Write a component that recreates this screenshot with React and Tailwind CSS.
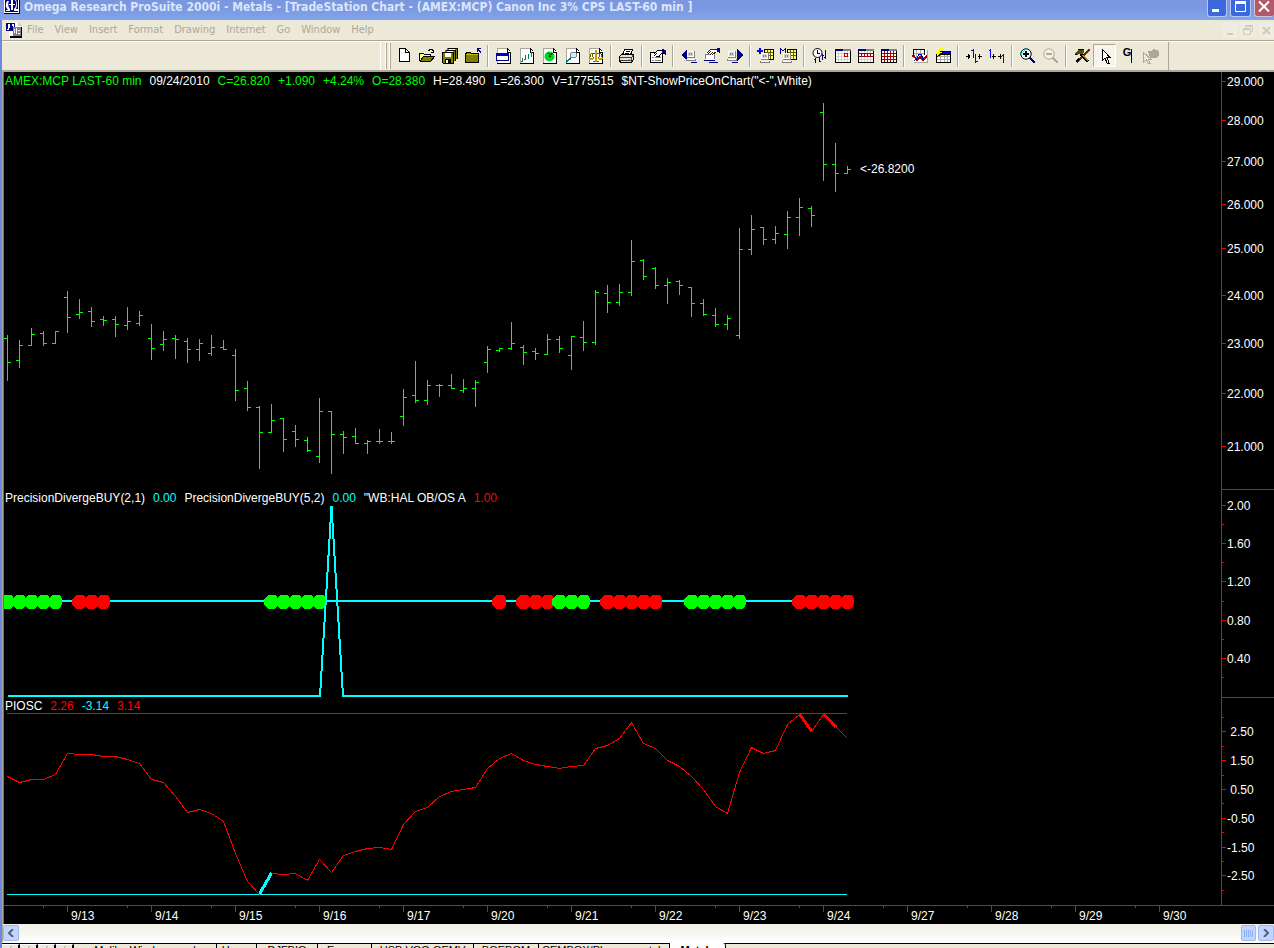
import React from "react";

/* Hourly bars, 12px apart: [high, low, open, close] in chart y units */
const BARS = [
  [335, 381, 338, 362], [340, 368, 360, 345], [328, 346, 345, 334], [331, 346, 333, 343],
  [331, 344, 343, 331], [291, 333, 297, 317], [299, 319, 314, 312], [307, 327, 311, 321],
  [316, 326, 319, 320], [316, 337, 319, 324], [307, 330, 325, 321], [311, 326, 323, 315],
  [324, 360, 338, 348], [331, 351, 344, 339], [335, 359, 338, 339], [338, 363, 341, 349],
  [339, 361, 349, 343], [335, 356, 353, 347], [340, 350, 347, 349], [349, 401, 355, 390],
  [381, 411, 388, 407], [406, 469, 407, 432], [404, 433, 432, 420], [418, 452, 418, 439],
  [425, 447, 431, 439], [437, 452, 440, 450], [398, 463, 456, 411], [411, 474, 411, 434],
  [431, 454, 434, 437], [428, 444, 436, 443], [440, 454, 443, 441], [429, 444, 441, 441],
  [432, 444, 441, 441], [389, 426, 416, 397], [361, 403, 395, 400], [380, 405, 400, 385],
  [384, 397, 385, 385], [374, 389, 385, 388], [379, 393, 390, 388], [380, 407, 388, 382],
  [346, 373, 362, 349], [348, 352, 350, 348], [322, 350, 348, 343], [345, 365, 347, 352],
  [348, 360, 351, 353], [334, 355, 354, 339], [336, 353, 339, 348], [336, 370, 355, 336],
  [321, 351, 337, 342], [290, 345, 342, 292], [285, 313, 293, 302], [284, 306, 302, 292],
  [240, 296, 292, 261], [259, 280, 260, 276], [267, 289, 268, 285], [278, 304, 285, 282],
  [280, 295, 281, 285], [287, 317, 287, 303], [299, 316, 303, 314], [308, 327, 315, 324],
  [315, 330, 324, 318], [228, 339, 335, 249], [215, 255, 249, 229], [227, 245, 227, 239],
  [226, 244, 239, 233], [211, 249, 234, 217], [198, 236, 217, 207], [206, 227, 208, 215],
  [103, 181, 112, 164], [143, 192, 164, 173], [166, 174, 173, 169],
];

const PIOSC = [
  776, 782, 779, 779, 774, 753, 754, 754, 756, 756, 759, 763, 779, 782, 796, 812, 809, 813,
  821, 853, 881, 894, 873, 874, 873, 880, 859, 872, 855, 851, 848, 847, 849, 824, 811, 807,
  796, 791, 789, 787, 768, 758, 753, 760, 764, 766, 768, 766, 765, 748, 745, 738, 722, 743,
  748, 760, 766, 776, 789, 806, 813, 772, 747, 753, 750, 724, 714, 731, 714, 726, 738,
];

/* [first bar, last bar, colour] */
const DOTS = [
  [0, 4, "#00ff00"], [6, 8, "#ff0000"], [22, 26, "#00ff00"], [41, 41, "#ff0000"],
  [43, 45, "#ff0000"], [46, 48, "#00ff00"], [50, 54, "#ff0000"], [57, 61, "#00ff00"],
  [66, 70, "#ff0000"],
];

const DATES = ["9/13", "9/14", "9/15", "9/16", "9/17", "9/20", "9/21", "9/22", "9/23", "9/24", "9/27", "9/28", "9/29", "9/30"];

const bx = (i) => 7 + 12 * i;

/* ---------- toolbar icons ---------- */
const Svg = ({ children, w = 16 }) => (
  <svg width={w} height="16" viewBox={`0 0 ${w} 16`} shapeRendering="crispEdges" fill="none" aria-hidden="true">
    {children}
  </svg>
);
const Page = () => (
  <>
    <path d="M1 0H11L15 4V16H1Z" fill="#fff" />
    <path d="M1.5 15V.5H11" stroke="#aca899" />
    <path d="M11.5 .5V4.5H14.5V15.5H1M11.5 .5L14.5 3.5" stroke="#000" />
  </>
);
const Monitor = ({ x = 0, y = 0 }) => (
  <g transform={`translate(${x} ${y})`}>
    <path d="M1 0H9V7H1Z" fill="#808080" />
    <path d="M1 0H8V6H1Z" fill="#fff" />
    <path d="M2 1H7V5H2Z" fill="#d4d0c8" />
    <path d="M3 2h1v2h-1zM5 2h1v2h-1z" fill="#808080" />
    <path d="M0 8H10V10H0Z" fill="#808080" />
    <path d="M1 8H9V9H1Z" fill="#fff" />
    <path d="M5 11H11V12H5Z" fill="#000080" />
  </g>
);
const Calendar = ({ children }) => (
  <>
    <path d="M0 1H16V15H0Z" fill="#fff" />
    <path d="M0 1H16V3H0Z" fill="#808080" />
    <path d="M0 1H8V3H0Z" fill="#000080" />
    <path d="M3.5 3V14M6.5 3V14M9.5 3V14M12.5 3V14M1 5.5H15M1 8.5H15M1 11.5H15" stroke="#d4d0c8" />
    <path d="M.5 3V14.5H15.5V3" stroke="#000" />
    {children}
  </>
);
const ICONS = {
  newFile: <Svg><path d="M3 1H10L14 5V14H3Z" fill="#fff" /><path d="M3.5 .5H9.5L13.5 4.5V13.5H3.5ZM9.5 .5V4.5H13.5" stroke="#000" /></Svg>,
  open: (
    <Svg>
      <path d="M1 5H5L6 6H11V9H4L1 13Z" fill="#ffff80" />
      <path d="M1 13L4 9H15L11 13Z" fill="#808000" />
      <path d="M.5 13V5.5H4.5L5.5 6.5H11.5V8.5M.5 13.5H11.5L15.5 8.5H4.5L1 13" stroke="#000" />
      <path d="M9.5 3V2.5H10.5V1.5H13.5V2.5H14.5V4.5M12 4.5H15" stroke="#000" />
    </Svg>
  ),
  saveAll: (
    <Svg>
      <path d="M5 0H16V11H5Z" fill="#808000" /><path d="M5.5 .5H15.5V11" stroke="#000" />
      <path d="M7 1H13V3H7Z" fill="#fff" />
      <path d="M3 2H14V13H3Z" fill="#808000" /><path d="M3.5 2.5H13.5V13" stroke="#000" />
      <path d="M5 3H11V5H5Z" fill="#fff" />
      <path d="M.5 4.5H11.5V15.5H1.5L.5 14.5Z" fill="#808000" stroke="#000" />
      <path d="M3 5H9V9H3Z" fill="#fff" /><path d="M3 11H9V15H3Z" fill="#000" /><path d="M4 12H6V15H4Z" fill="#fff" />
    </Svg>
  ),
  closeFolder: (
    <Svg>
      <path d="M.5 14.5V5.5H1.5V4.5H5.5L6.5 5.5H13.5V14.5Z" fill="#808000" stroke="#000" />
      <path d="M1 6.5H13" stroke="#c0c000" />
      <path d="M12 0H16V1H14V2H15V3H16V5H15V4H14V3H13V4H12Z" fill="#000080" />
    </Svg>
  ),
  winPage: <Svg><Page /><path d="M0 5H13V13H0Z" fill="#fff" /><path d="M.5 5.5H12.5V12.5H.5Z" stroke="#000080" /><path d="M0 5H13V8H0Z" fill="#0000c0" /></Svg>,
  chartPage: <Svg><Page /><path d="M3.5 10V14M2 13.5H4M6.5 7V12M5 11.5H7M9.5 6V11M9 7.5H10M12.5 4V9" stroke="#008060" /></Svg>,
  radarPage: <Svg><Page /><circle cx="7.5" cy="8.5" r="5" fill="#00d820" shapeRendering="auto" /><path d="M7 8L11 5M7 8.5H9" stroke="#004000" /><path d="M5 5.500H8" stroke="#008000" /></Svg>,
  searchPage: <Svg><Page /><path d="M1 14L6 10" stroke="#008080" strokeWidth="2" /><circle cx="8.500" cy="7" r="3" fill="#c0f0ff" stroke="#808080" /><path d="M9 5H10V6H9Z" fill="#fff" /></Svg>,
  scalePage: <Svg><Page /><path d="M5 13.5H11M3 5.5H13" stroke="#605000" /><path d="M8 2V14" stroke="#c0a000" strokeWidth="2" /><path d="M3.500 5L1.500 10M3.500 5L5.500 10M12.500 5L10.500 10M12.500 5L14.500 10" stroke="#606000" /><path d="M1 10H6V11H5V12H2V11H1ZM10 10H15V11H14V12H11V11H10Z" fill="#c0a000" /></Svg>,
  print: (
    <Svg>
      <path d="M5 1H14L12 7H3Z" fill="#fff" />
      <path d="M5.5 1.500H13.500L11.500 7M5.500 1.500L3.500 7M6.500 3.500H11M5.500 5.500H10" stroke="#000" />
      <path d="M.5 8.500L2.500 6.500H14.500V11.500L12.500 14.500H1.500L.5 12.500Z" fill="#e4e0d4" stroke="#000" />
      <path d="M1 9.500H12.500L14.500 7M1 12.500H12.500M12.500 9.500V14" stroke="#404040" />
      <path d="M9 11H11V12H9Z" fill="#e0d000" />
    </Svg>
  ),
  props: (
    <Svg>
      <path d="M.5 4.500H12.500V14.500H.5Z" fill="#fff" stroke="#000" />
      <path d="M2 9.500H4M5 9.500H11M2 12.500H4M5 12.500H11" stroke="#808080" />
      <path d="M3 6L7 2H13V5L9 8H6Z" fill="#fff" /><path d="M3.500 6.500L7.500 2.500H12.500M4 8L7 5M6 8.500H9L12 5" stroke="#000" />
      <path d="M12 1H14V2H16V7H15V6H12Z" fill="#000080" />
    </Svg>
  ),
  prevData: <Svg><path d="M0 7L6 1V13Z" fill="#000080" /><Monitor x={5} y={3} /></Svg>,
  dataProps: <Svg><path d="M1 6H10V11H1Z" fill="#fff" stroke="#808080" /><path d="M2 6L6 1H13V4L9 7Z" fill="#fff" /><path d="M2.500 5.500L6.500 1.500H13M4 6L7 3M6 7L9 4M8 7L12 4" stroke="#202020" /><path d="M13 0H16V5H15V4H13Z" fill="#000080" /><path d="M0 12H11V13H0ZM5 14H14V15H5Z" fill="#000080" /><path d="M1 11H11V12H1Z" fill="#fff" /></Svg>,
  nextData: <Svg><path d="M16 7L10 1V13Z" fill="#000080" /><Monitor x={0} y={3} /></Svg>,
  addTable: <Svg w={17}><path d="M7.500 1.500H16.500V11.500H7.500Z" fill="#ffff80" stroke="#000" /><path d="M8 4.500H16M8 7.500H16M10.500 2V11M13.500 2V11" stroke="#606000" /><path d="M2 0H4V2H6V4H4V6H2V4H0V2H2Z" fill="#0000ff" /><Monitor x={3} y={5} /></Svg>,
  mTable: <Svg w={17}><path d="M7.500 1.500H16.500V11.500H7.500Z" fill="#ffff80" stroke="#000" /><path d="M8 4.500H16M8 7.500H16M10.500 2V11M13.500 2V11" stroke="#606000" /><path d="M.5 6V.5L3 3L5.500 .5V6" stroke="#000080" /><Monitor x={2} y={5} /></Svg>,
  clock: <Svg><circle cx="5.500" cy="5" r="4.500" fill="#fff" stroke="#000" shapeRendering="auto" /><path d="M5.500 2V5.500H8" stroke="#000" /><path d="M3.500 10V15M2 11.500H4M7.500 9V14M7 13.500H9M10.500 6V12M10 7.500H12M13.500 2V11M12 9.500H13" stroke="#000080" /></Svg>,
  cal1: <Svg><Calendar><path d="M9.500 5.500H12.500V8.500H9.500Z" stroke="#c00000" /></Calendar></Svg>,
  cal2: <Svg><Calendar><path d="M1 5.500H15M1 8.500H15M3.500 5V9M6.500 5V9M9.500 5V9M12.500 5V9" stroke="#a00000" /></Calendar></Svg>,
  cal3: <Svg><Calendar><path d="M3.500 3V14M6.500 3V14M9.500 3V14M12.500 3V14M1 5.500H15M1 8.500H15M1 11.500H15" stroke="#a00000" /></Calendar></Svg>,
  gridChart: <Svg><path d="M1 1H14V14H1Z" fill="#fff" /><path d="M4.500 1V10M8.500 1V10M1 5.500H13M1 9.500H13" stroke="#aca899" /><path d="M1.500 9V1.500H12.500V7" stroke="#000" /><path d="M15.500 2V14.500H2" stroke="#aca899" /><path d="M0 7.500H2L5 11.500L8 8.500L11 11.500L15 7.500" stroke="#a00000" /><path d="M0 8.500H2L5 12.500L8 9.500L11 12.500L15 8.500" stroke="#a00000" /><path d="M2 12.500L4 11.500L7 6.500H9L12 12.500" stroke="#0000c0" /></Svg>,
  flash: <Svg><path d="M1.500 5.500H15.500V14.500H1.500Z" fill="#fff" stroke="#000" /><path d="M5 3H16V6H5Z" fill="#0000c0" stroke="#000" /><path d="M2 8.500H15M2 11.500H15M5.500 7V14M9.500 7V14M12.500 7V14" stroke="#aca899" /><path d="M4 0H8L5 4H8L1 10L3 6H0Z" fill="#ffff00" /><path d="M8 4L1 10" stroke="#000" /></Svg>,
  squeeze: <Svg><path d="M0 8.500H4M12 8.500H16M2.500 6V11M13.500 6V11M3 7V10M13 7V10" stroke="#000" /><path d="M7.500 1V10M5 2.500H7M9.500 6V15M10 13.500H12" stroke="#0000ff" /></Svg>,
  expand: <Svg><path d="M3 8.500H7M9 8.500H13M4.500 6V11M11.500 6V11" stroke="#000" /><path d="M1.500 1V10M0 2.500H1M14.500 6V15M13 7.500H15" stroke="#0000ff" /></Svg>,
  zoomIn: <Svg><circle cx="6" cy="6" r="5.200" fill="#e8ffff" stroke="#000" shapeRendering="auto" /><path d="M2.500 5A4 4 0 0 1 5 2.500" stroke="#00ffff" /><path d="M3 5H9V7H3ZM5 3H7V9H5Z" fill="#000" /><path d="M10 10L15 15" stroke="#000080" strokeWidth="2" /></Svg>,
  zoomOut: <Svg><circle cx="6" cy="6" r="5.200" stroke="#aca899" fill="#f4f2e8" shapeRendering="auto" /><path d="M3 5H9V7H3Z" fill="#aca899" /><path d="M10 10L15 15" stroke="#aca899" strokeWidth="2" /></Svg>,
  tools: <Svg><path d="M15.500 1.500L9 8L2.500 14.500" stroke="#802000" strokeWidth="2" /><path d="M2 14L5 11" stroke="#000" strokeWidth="2" /><path d="M7 6L14 13.500" stroke="#000" strokeWidth="3" /><path d="M7.500 6L14 12.500" stroke="#a09000" /><path d="M1 5L4 2H10V4L9 6H5L3 7H1Z" fill="#505000" /><path d="M1 6.500H3M4 1.500H10M9 6.500H6" stroke="#000" /></Svg>,
  pointer: <Svg><path d="M5.500 1.500V12.500L8 10L10 15H12L10 9.500H13Z" fill="#fff" stroke="#000" /></Svg>,
  handOff: <Svg><path d="M5 3H8L10 1L16 3V8L13 10H7Z" fill="#aca899" /><path d="M.5 4.500V14.500L3.500 12L5 15H7L5.500 11.500H8.500Z" fill="#ece9d8" stroke="#aca899" /></Svg>,
};

const GROUPS = [
  [["New", "newFile"], ["Open", "open"], ["Save all", "saveAll"], ["Close workspace", "closeFolder"]],
  [["New window", "winPage"], ["New chart", "chartPage"], ["New radar screen", "radarPage"], ["New search", "searchPage"], ["New option analysis", "scalePage"]],
  [["Print", "print"]],
  [["Properties", "props"]],
  [["Previous symbol", "prevData"], ["Symbol properties", "dataProps"], ["Next symbol", "nextData"]],
  [["Insert symbol", "addTable"], ["Insert multiple", "mTable"]],
  [["Intraday", "clock"], ["Daily", "cal1"], ["Weekly", "cal2"], ["Monthly", "cal3"]],
  [["Insert analysis", "gridChart"], ["Format analysis", "flash"]],
  [["Decrease spacing", "squeeze"], ["Increase spacing", "expand"]],
  [["Zoom in", "zoomIn"], ["Zoom out", "zoomOut"]],
];

const ToolButton = ({ label, children, pressed }) => (
  <button
    type="button"
    aria-label={label}
    className={
      pressed
        ? "flex h-[23px] w-[23px] items-center justify-center border border-t-[#aca899] border-l-[#aca899] border-r-white border-b-white bg-[#f6f4ec]"
        : "flex h-[23px] w-[23px] items-center justify-center"
    }
  >
    {children}
  </button>
);
const Separator = () => (
  <div className="flex w-2 justify-center">
    <div className="h-[22px] w-[2px] border-l border-[#aca899] bg-white" />
  </div>
);

/* ---------- window frame ---------- */
function TitleBar() {
  return (
    <header className="flex h-5 shrink-0 items-start bg-linear-to-b from-[#7a96df] via-[#7b9ae2] to-[#82a5ea] pl-[2px]">
      <svg width="16" height="14" viewBox="0 0 16 14" className="mr-1 ml-[2px] shrink-0" aria-hidden="true">
        <path d="M0 0H16V14H0Z" fill="#000" />
        <path d="M0 0H15V13H0Z" fill="#fff" />
        <path d="M1 0H14V12H1Z" fill="#000080" />
        <path d="M3 1Q0 6 4 10H2V11H6V9Q3 5 5 1ZM11 0Q14 4 10 9V11H14V9H12Q14 4 12 0ZM7 0H9V10H7ZM5 4H7V5H5ZM9 4H11V5H9Z" fill="#fff" />
      </svg>
      <h1 className="min-w-0 flex-1 font-['DejaVu_Sans_Condensed','Open_Sans',sans-serif] text-[12px] leading-[15px] font-bold whitespace-nowrap text-[#dbe5fb]">
        Omega Research ProSuite 2000i - Metals - [TradeStation Chart - (AMEX:MCP) Canon Inc 3% CPS LAST-60 min ]
      </h1>
      <div className="flex gap-[3px]">
        <button type="button" aria-label="Minimize" className="h-[17px] w-[20px] rounded-b-[3px] border border-t-0 border-[#b4c8f6] bg-[#3c68dc]">
          <svg width="18" height="16" viewBox="0 0 18 16"><path d="M4 9H11V12H4Z" fill="#fff" /></svg>
        </button>
        <button type="button" aria-label="Maximize" className="h-[17px] w-[21px] rounded-b-[3px] border border-t-0 border-[#b4c8f6] bg-[#3c68dc]">
          <svg width="19" height="16" viewBox="0 0 19 16" fill="none"><path d="M4.500 1.500H14.500V11.500H4.500Z" stroke="#fff" /><path d="M4 1H15V4H4Z" fill="#fff" /></svg>
        </button>
        <button type="button" aria-label="Close" className="h-[17px] w-[20px] rounded-b-[3px] border border-t-0 border-r-0 border-[#d8c0d8] bg-[#b4596a]">
          <svg width="18" height="16" viewBox="0 0 18 16"><path d="M4 1.500L14 11.500M14 1.500L4 11.500" stroke="#fff" strokeWidth="2" /></svg>
        </button>
      </div>
    </header>
  );
}

function MenuBar() {
  return (
    <nav className="flex h-5 items-center bg-[#ece9d8] pl-1 font-['DejaVu_Sans_Condensed','Noto_Sans',sans-serif] text-[11px] text-[#aca899]">
      <svg width="16" height="16" viewBox="0 0 16 16" shapeRendering="crispEdges" className="mr-[5px]" aria-hidden="true">
        <path d="M0 0H12L16 4V16H3V9H0Z" fill="#fff" />
        <path d="M0 1H9V9H0Z" fill="#000080" />
        <path d="M2 2H4V6H3V8H1V7H2ZM6 2H8V8H7V4H6Z" fill="#fff" />
        <path d="M7 5H15V14H7Z" fill="#808080" />
        <path d="M8 7H9V11H8ZM10 6H11V12H10ZM12 8H14V9H12ZM12 11H14V12H12Z" fill="#fff" />
        <path d="M4 14H16V16H4ZM15 5H16V16H15Z" fill="#000" />
        <path d="M12 0L16 4H12Z" fill="#d4d0c8" />
      </svg>
      <div className="flex flex-1 gap-[11px]">
        {["File", "View", "Insert", "Format", "Drawing", "Internet", "Go", "Window", "Help"].map((m) => (
          <button key={m} type="button">{m}</button>
        ))}
      </div>
      <div className="flex gap-[2px] text-[#cfccba]">
        <button type="button" aria-label="Minimize chart" className="h-4 w-4 bg-[#efede2]">
          <svg width="16" height="16"><path d="M5 11H11V13H5Z" fill="currentColor" /></svg>
        </button>
        <button type="button" aria-label="Restore chart" className="h-4 w-4 bg-[#efede2]">
          <svg width="16" height="16" fill="none" stroke="currentColor"><path d="M5.500 5V3.500H12.500V9.500H11M5 4.500H13M3.500 6.500H10.500V12.500H3.500ZM3 7.500H11" /></svg>
        </button>
        <button type="button" aria-label="Close chart" className="h-4 w-4 bg-[#efede2]">
          <svg width="16" height="16"><path d="M5 5L12 12M12 5L5 12" stroke="currentColor" strokeWidth="2" /></svg>
        </button>
      </div>
    </nav>
  );
}

function ToolBar() {
  return (
    <div className="flex h-[30px] items-center border-t border-[#aca899] bg-[#ece9d8]">
      <div className="flex h-full w-full items-center border-t border-white">
        <div className="h-full w-[379px] shrink-0 border-r border-white" />
        <div className="mr-px ml-1 flex shrink-0 gap-[2px]">
          <div className="h-[26px] w-[2px] border-l border-white bg-[#aca899]" />
          <div className="h-[26px] w-[2px] border-l border-white bg-[#aca899]" />
        </div>
        <div className="flex h-full items-center pb-px">
          {GROUPS.map((g) => (
            <React.Fragment key={g[0][0]}>
              {g.map(([label, icon]) => <ToolButton key={label} label={label}>{ICONS[icon]}</ToolButton>)}
              <Separator />
            </React.Fragment>
          ))}
          <ToolButton label="Drawing tools">{ICONS.tools}</ToolButton>
          <ToolButton label="Pointer" pressed>{ICONS.pointer}</ToolButton>
          <ToolButton label="Global lines">
            <span className="mb-2 font-['Liberation_Sans',sans-serif] text-[11px] leading-3 font-bold">G</span>
            <span className="h-[14px] w-px bg-black" />
          </ToolButton>
          <ToolButton label="Pointer assistant">{ICONS.handOff}</ToolButton>
        </div>
        <div className="ml-[6px] h-full w-px bg-[#aca899]" />
      </div>
    </div>
  );
}

/* ---------- chart panes ---------- */
function Axis({ top, height, majors, minors = [] }) {
  return (
    <svg width="53" height={height} className="shrink-0 overflow-visible" shapeRendering="crispEdges">
      <g transform={`translate(0 ${-top})`}>
        <path d={`M.5 ${top}V${top + height}`} stroke="#ff0000" />
        {majors.map(([y, label]) => (
          <g key={label}>
            <path d={`M0 ${y}.5H5`} stroke="#ff0000" />
            <text x="6" y={y + 5} fill="#fff" xmlSpace="preserve">{label}</text>
          </g>
        ))}
        {minors.map((y) => <path key={y} d={`M0 ${y}.5H3`} stroke="#ff0000" />)}
      </g>
    </svg>
  );
}

function PricePane() {
  return (
    <section className="flex h-[417px]">
      <div className="min-w-0 flex-1">
        <div className="flex h-[18px] items-center gap-2 pl-px whitespace-nowrap text-[#00ff00]">
          <span>AMEX:MCP LAST-60 min</span>
          <span className="text-white">09/24/2010</span>
          <span>C=26.820</span>
          <span>+1.090</span>
          <span>+4.24%</span>
          <span>O=28.380</span>
          <span className="text-white">H=28.490</span>
          <span className="text-white">L=26.300</span>
          <span className="text-white">V=1775515</span>
          <span className="text-white">{'$NT-ShowPriceOnChart("<-",White)'}</span>
        </div>
        <svg className="block h-[399px] w-full" shapeRendering="crispEdges">
          <g transform="translate(-4 -90)">
            {BARS.map(([h, l, o, c], i) => (
              <path key={i} d={`M${bx(i)}.5 ${h}V${l}M${bx(i) - 3} ${o}.5H${bx(i)}M${bx(i)} ${c}.5H${bx(i) + 4}`} stroke="#00ff00" fill="none" />
            ))}
            <text x="860" y="173" fill="#fff">{"<-26.8200"}</text>
          </g>
        </svg>
      </div>
      <Axis
        top={72}
        height={417}
        majors={[[81, "29.000"], [120, "28.000"], [161, "27.000"], [204, "26.000"], [248, "25.000"], [295, "24.000"], [343, "23.000"], [393, "22.000"], [446, "21.000"]]}
      />
    </section>
  );
}

function DivergePane() {
  return (
    <section className="flex h-[208px]">
      <div className="min-w-0 flex-1">
        <div className="flex h-4 items-center gap-2 pt-[2px] pl-px whitespace-nowrap text-white">
          <span>PrecisionDivergeBUY(2,1)</span>
          <span className="text-[#00ffff]">0.00</span>
          <span>PrecisionDivergeBUY(5,2)</span>
          <span className="text-[#00ffff]">0.00</span>
          <span>"WB:HAL OB/OS A</span>
          <span className="text-[#ff0000]">1.00</span>
        </div>
        <svg className="block h-48 w-full" shapeRendering="crispEdges">
          <g transform="translate(-4 -505)" fill="none" strokeWidth="2">
            <path d="M7 601H848" stroke="#00ffff" />
            {DOTS.flatMap(([a, b, color]) =>
              Array.from({ length: b - a + 1 }, (_, k) => (
                <path key={a + k} d={`M${bx(a + k) - 3} 595h7l2 2l1 2v2l0 1v2l-1 2l-3 3h-6l-3 -3l-1 -2v-1l-1 -1l1 -1v-1l1 -2z`} fill={color} />
              ))
            )}
            <path d="M8 696H320L331.500 506L343 696H848" stroke="#00ffff" />
          </g>
        </svg>
      </div>
      <div className="border-t border-[#ff0000]">
        <Axis
          top={490}
          height={207}
          majors={[[505, "2.00"], [543, "1.60"], [581, "1.20"], [620, "0.80"], [658, "0.40"]]}
          minors={[524, 562, 601, 639, 677]}
        />
      </div>
    </section>
  );
}

function OscillatorPane() {
  return (
    <section className="flex h-[208px]">
      <div className="min-w-0 flex-1">
        <div className="flex h-4 items-center gap-2 pt-[2px] pl-px whitespace-nowrap text-white">
          <span>PIOSC</span>
          <span className="text-[#ff0000]">2.26</span>
          <span className="text-[#00ffff]">-3.14</span>
          <span className="text-[#ff0000]">3.14</span>
        </div>
        <svg className="block h-48 w-full" shapeRendering="crispEdges">
          <g transform="translate(-4 -713)" fill="none">
            <path d="M7 713.5H847" stroke="#ff0000" />
            <path d="M7 894.5H847" stroke="#00ffff" />
            <polyline points={PIOSC.map((y, i) => `${bx(i) + 0.5},${y + 0.5}`).join(" ")} stroke="#ff0000" />
            <path d="M799.500 714L811.500 731M823.500 714L836 727" stroke="#ff0000" strokeWidth="3" />
            <path d="M259.500 894L271.500 873" stroke="#00ffff" strokeWidth="3" />
          </g>
        </svg>
      </div>
      <div className="border-t border-[#ff0000]">
        <Axis
          top={698}
          height={207}
          majors={[[731, "\u00a02.50"], [760, "\u00a01.50"], [789, "\u00a00.50"], [818, "-0.50"], [847, "-1.50"], [875, "-2.50"]]}
          minors={[717, 746, 775, 803, 832, 861, 890]}
        />
      </div>
    </section>
  );
}

function TimeAxis() {
  return (
    <svg className="block h-[19px] w-full border-t border-[#ff0000]" shapeRendering="crispEdges">
      {DATES.map((d, i) => (
        <g key={d} transform={`translate(${63 + 84 * i} 0)`}>
          <path d="M.5 0V6M-23.500 0V2" stroke="#ff0000" />
          <text x="4" y="14" fill="#fff">{d}</text>
        </g>
      ))}
    </svg>
  );
}

function ScrollRow() {
  const btn = "flex h-4 items-center justify-center rounded-[2px] border border-[#9db8ec] bg-[#c3d4fd]";
  return (
    <div className="flex h-[18px] items-center bg-linear-to-b from-[#f1f0e8] to-[#fefefb]">
      <button type="button" aria-label="Scroll left" className={`${btn} w-4`}>
        <svg width="8" height="8" viewBox="0 0 8 8" fill="none"><path d="M6 0L2 4L6 8" stroke="#4d6185" strokeWidth="2" /></svg>
      </button>
      <div className="flex-1" />
      <button type="button" aria-label="Scroll thumb" className={`${btn} w-[15px]`}>
        <svg width="9" height="7" shapeRendering="crispEdges"><path d="M.5 0V7M2.500 0V7M4.500 0V7M6.500 0V7M8.500 0V7" stroke="#8cb0f8" /></svg>
      </button>
      <button type="button" aria-label="Scroll right" className={`${btn} ml-[2px] w-4`}>
        <svg width="8" height="8" viewBox="0 0 8 8" fill="none"><path d="M2 0L6 4L2 8" stroke="#4d6185" strokeWidth="2" /></svg>
      </button>
    </div>
  );
}

const TABS = [
  ["Malibu Windows and", "w-[143px]"], ["Home", "w-[40px]"], ["DJFBIO", "w-[61px]"], ["Energy", "w-[54px]"],
  ["USB VOG OEMV", "w-[102px]"], ["BOEBOM", "w-[65px]"], ["CEMBOX/Pharmaceutals", "w-[131px]"],
];
function SheetTabs() {
  return (
    <div className="flex h-5 border-t border-black bg-[#ece9d8] text-[11px] leading-3 text-black">
      {["First", "Previous", "Next", "Last"].map((l) => (
        <button key={l} type="button" aria-label={`${l} sheet`} className="flex h-4 w-[18px] justify-center border-t border-r-2 border-t-white border-r-black bg-[#ece9d8]">
          <svg width="8" height="10" viewBox="0 0 8 10"><path d="M6 1L2 5L6 9" stroke="#aca899" fill="none" /></svg>
        </button>
      ))}
      {TABS.map(([t, w]) => (
        <button key={t} type="button" className={`flex h-4 shrink-0 justify-center border-r border-black whitespace-nowrap ${w}`}>{t}</button>
      ))}
      <button type="button" className="-mt-px flex h-4 w-[56px] shrink-0 justify-center rounded-tr-[3px] border-r border-black bg-white pt-px font-bold">Metals</button>
    </div>
  );
}

export default function App() {
  return (
    <div className="flex h-screen flex-col overflow-hidden bg-[#6f88dc] font-['Liberation_Sans',Arial,sans-serif] text-[12px]">
      <TitleBar />
      <div className="ml-[2px] shrink-0 bg-[#ece9d8]">
        <MenuBar />
        <ToolBar />
        <main className="border-t-2 border-l border-[#aca899]">
          <div className="overflow-hidden border-l border-[#716f64] bg-black">
            <PricePane />
            <DivergePane />
            <OscillatorPane />
            <TimeAxis />
          </div>
          <ScrollRow />
        </main>
        <div className="h-[1px] bg-white" />
        <SheetTabs />
      </div>
    </div>
  );
}
